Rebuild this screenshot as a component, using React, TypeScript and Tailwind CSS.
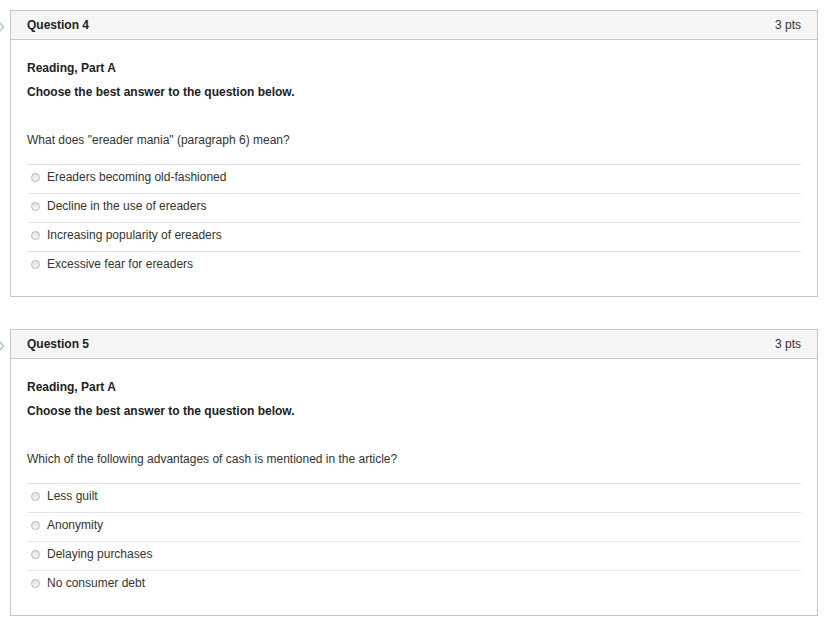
import React from 'react'

type Q = { num: number; prompt: string; answers: string[] }

const QUESTIONS: Q[] = [
  {
    num: 4,
    prompt: 'What does "ereader mania" (paragraph 6) mean?',
    answers: ['Ereaders becoming old-fashioned', 'Decline in the use of ereaders', 'Increasing popularity of ereaders', 'Excessive fear for ereaders'],
  },
  {
    num: 5,
    prompt: 'Which of the following advantages of cash is mentioned in the article?',
    answers: ['Less guilt', 'Anonymity', 'Delaying purchases', 'No consumer debt'],
  },
]

function Radio() {
  return (
    <span className="w-[9px] h-[9px] rounded-full border border-[#b9b9b9] bg-gradient-to-b from-[#e4e4e4] to-[#f6f6f6] shrink-0" />
  )
}

function QuestionCard({ q }: { q: Q }) {
  return (
    <div className="relative border border-[#c6c6c6] bg-white">
      {/* question marker, mostly off-screen */}
      <svg className="absolute left-[-24px] top-[9px]" width="18" height="14" viewBox="0 0 18 14">
        <path d="M12 2 L16.5 7 L12 12" fill="none" stroke="#a9c8e0" strokeWidth="1.5" />
      </svg>
      <div className="flex justify-between items-center bg-[#f5f5f5] border-b border-[#c6c6c6] px-4 py-[5px] leading-[18px] text-[12px] font-bold text-[#222]">
        <span>Question {q.num}</span>
        <span className="font-normal text-[#333]">3 pts</span>
      </div>
      <div className="px-4 pt-[19px] pb-4 text-[12px] leading-[18px] text-[#333]">
        <p className="font-bold text-[#222]">Reading, Part A</p>
        <p className="font-bold mt-[6px] text-[#222]">Choose the best answer to the question below.</p>
        <p className="mt-[30px]">{q.prompt}</p>
        <div className="mt-[15px]">
          {q.answers.map((a) => (
            <div key={a} className="flex items-center gap-[7px] pl-[4px] pt-[3px] pb-[7px] border-t border-[#e4e4e4]">
              <Radio />
              <span>{a}</span>
            </div>
          ))}
        </div>
      </div>
    </div>
  )
}

export default function App() {
  return (
    <div className="min-h-screen bg-white pt-[10px] pl-[10px] pr-[11px]" style={{ fontFamily: '"Liberation Sans", Arial, sans-serif' }}>
      <div className="flex flex-col gap-[32px]">
        {QUESTIONS.map((q) => <QuestionCard key={q.num} q={q} />)}
      </div>
    </div>
  )
}
